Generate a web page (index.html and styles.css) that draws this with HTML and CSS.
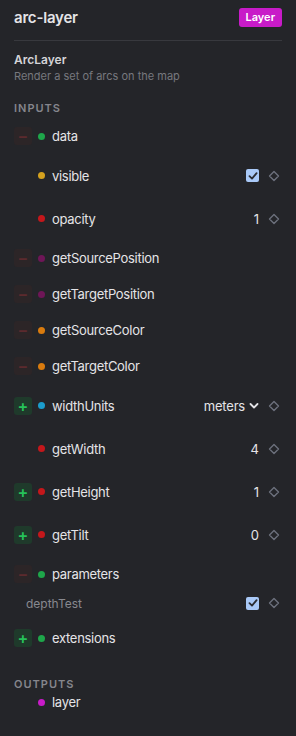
FILE: index.html
```html
<!DOCTYPE html>
<html>
<head>
  <title>arc-layer</title>
  <link rel="stylesheet" href="styles.css">
</head>
<body>
<div class="panel">
  <!-- Header -->
  <header class="panel-header">
    <div class="node-title">arc-layer</div>
    <span class="badge">Layer</span>
  </header>

  <div class="node-info">
    <div class="node-type">ArcLayer</div>
    <div class="node-desc">Render a set of arcs on the map</div>
  </div>

  <div class="section-title">INPUTS</div>

  <div class="row">
    <span class="btn minus">&minus;</span>
    <span class="dot green"></span>
    <span class="label">data</span>
  </div>

  <div class="row tall">
    <span class="btn-space"></span>
    <span class="dot yellow"></span>
    <span class="label">visible</span>
    <span class="checkbox"><svg width="10" height="10" viewBox="0 0 10 10"><path d="M1.5 5.2 L4 7.6 L8.6 2.2" fill="none" stroke="#2b2d33" stroke-width="1.8" stroke-linecap="round" stroke-linejoin="round"/></svg></span>
    <svg class="diamond" width="12" height="12" viewBox="0 0 12 12"><path d="M6 1.5 L10.5 6 L6 10.5 L1.5 6 Z" fill="none" stroke="#6c707c" stroke-width="1.4" stroke-linejoin="round"/></svg>
  </div>

  <div class="row tall">
    <span class="btn-space"></span>
    <span class="dot red"></span>
    <span class="label">opacity</span>
    <span class="value">1</span>
    <svg class="diamond" width="12" height="12" viewBox="0 0 12 12"><path d="M6 1.5 L10.5 6 L6 10.5 L1.5 6 Z" fill="none" stroke="#6c707c" stroke-width="1.4" stroke-linejoin="round"/></svg>
  </div>

  <div class="row">
    <span class="btn minus">&minus;</span>
    <span class="dot purple"></span>
    <span class="label">getSourcePosition</span>
  </div>

  <div class="row">
    <span class="btn minus">&minus;</span>
    <span class="dot purple"></span>
    <span class="label">getTargetPosition</span>
  </div>

  <div class="row">
    <span class="btn minus">&minus;</span>
    <span class="dot orange"></span>
    <span class="label">getSourceColor</span>
  </div>

  <div class="row">
    <span class="btn minus">&minus;</span>
    <span class="dot orange"></span>
    <span class="label">getTargetColor</span>
  </div>

  <div class="row tall">
    <span class="btn plus">+</span>
    <span class="dot blue"></span>
    <span class="label">widthUnits</span>
    <span class="select">meters <svg width="10" height="8" viewBox="0 0 10 8"><path d="M1.5 2 L5 5.5 L8.5 2" fill="none" stroke="#e4e4e7" stroke-width="1.8" stroke-linecap="round" stroke-linejoin="round"/></svg></span>
    <svg class="diamond" width="12" height="12" viewBox="0 0 12 12"><path d="M6 1.5 L10.5 6 L6 10.5 L1.5 6 Z" fill="none" stroke="#6c707c" stroke-width="1.4" stroke-linejoin="round"/></svg>
  </div>

  <div class="row tall">
    <span class="btn-space"></span>
    <span class="dot red"></span>
    <span class="label">getWidth</span>
    <span class="value">4</span>
    <svg class="diamond" width="12" height="12" viewBox="0 0 12 12"><path d="M6 1.5 L10.5 6 L6 10.5 L1.5 6 Z" fill="none" stroke="#6c707c" stroke-width="1.4" stroke-linejoin="round"/></svg>
  </div>

  <div class="row tall">
    <span class="btn plus">+</span>
    <span class="dot red"></span>
    <span class="label">getHeight</span>
    <span class="value">1</span>
    <svg class="diamond" width="12" height="12" viewBox="0 0 12 12"><path d="M6 1.5 L10.5 6 L6 10.5 L1.5 6 Z" fill="none" stroke="#6c707c" stroke-width="1.4" stroke-linejoin="round"/></svg>
  </div>

  <div class="row tall">
    <span class="btn plus">+</span>
    <span class="dot red"></span>
    <span class="label">getTilt</span>
    <span class="value">0</span>
    <svg class="diamond" width="12" height="12" viewBox="0 0 12 12"><path d="M6 1.5 L10.5 6 L6 10.5 L1.5 6 Z" fill="none" stroke="#6c707c" stroke-width="1.4" stroke-linejoin="round"/></svg>
  </div>

  <div class="row">
    <span class="btn minus">&minus;</span>
    <span class="dot green"></span>
    <span class="label">parameters</span>
  </div>

  <div class="row sub">
    <span class="label sub-label">depthTest</span>
    <span class="checkbox"><svg width="10" height="10" viewBox="0 0 10 10"><path d="M1.5 5.2 L4 7.6 L8.6 2.2" fill="none" stroke="#2b2d33" stroke-width="1.8" stroke-linecap="round" stroke-linejoin="round"/></svg></span>
    <svg class="diamond" width="12" height="12" viewBox="0 0 12 12"><path d="M6 1.5 L10.5 6 L6 10.5 L1.5 6 Z" fill="none" stroke="#6c707c" stroke-width="1.4" stroke-linejoin="round"/></svg>
  </div>

  <div class="row">
    <span class="btn plus">+</span>
    <span class="dot green"></span>
    <span class="label">extensions</span>
  </div>

  <div class="section-title outputs">OUTPUTS</div>

  <div class="row output">
    <span class="btn-space"></span>
    <span class="dot magenta"></span>
    <span class="label">layer</span>
  </div>
</div>
</body>
</html>
```

FILE: styles.css
```css
/* General */
html, body {
    margin: 0;
    background-color: #242529;
}

body {
    font-family: Inter, "Noto Sans", sans-serif;
    color: #e4e4e7;
    min-height: 736px;
}

.panel {
    padding: 0 14px;
}

/* Header */
.panel-header {
    box-sizing: border-box;
    display: flex;
    justify-content: space-between;
    align-items: flex-start;
    height: 41px;
    padding-top: 8px;
    border-bottom: 1px solid #38393e;
}

.node-title {
    font-size: 15px;
    font-weight: 600;
    line-height: 20px;
    letter-spacing: -0.2px;
    color: #e4e4e7;
}

.badge {
    background-color: #c81bc8;
    color: #fff;
    font-size: 11px;
    font-weight: 600;
    border-radius: 3px;
    height: 19px;
    line-height: 19px;
    padding: 0 7px;
}

.node-info {
    margin-top: 11px;
}

.node-type {
    font-size: 12px;
    font-weight: 600;
    line-height: 16px;
    color: #d4d4d8;
}

.node-desc {
    font-size: 11px;
    line-height: 16px;
    color: #77787e;
}

.section-title {
    margin-top: 17px;
    margin-bottom: 3px;
    font-size: 11px;
    line-height: 14px;
    font-weight: 600;
    letter-spacing: 1px;
    color: #85868c;
}

.section-title.outputs {
    margin-top: 21px;
    margin-bottom: 0;
}

/* Rows */
.row {
    display: flex;
    align-items: center;
    height: 36px;
}

.row.tall {
    height: 43px;
}

.row.sub {
    height: 22px;
    margin-bottom: 6px;
}

.row.output {
    height: 22px;
}

.btn, .btn-space {
    width: 18px;
    height: 18px;
    flex-shrink: 0;
}

.btn {
    display: flex;
    align-items: center;
    justify-content: center;
    border-radius: 3px;
    font-size: 16px;
    font-weight: 600;
    line-height: 1;
}

.btn.minus {
    background-color: #2c2527;
    color: #5c2a2e;
}

.btn.plus {
    background-color: #1f3a2b;
    color: #26c25a;
}

.dot {
    width: 7px;
    height: 7px;
    border-radius: 50%;
    margin-left: 6px;
    margin-right: 7px;
    flex-shrink: 0;
}

.dot.green { background-color: #1ea64a; }
.dot.yellow { background-color: #d4a11e; }
.dot.red { background-color: #c4171b; }
.dot.purple { background-color: #6e1657; }
.dot.orange { background-color: #d97b0e; }
.dot.blue { background-color: #1b9ccc; }
.dot.magenta { background-color: #c81bc8; }

.label {
    font-size: 13px;
    letter-spacing: -0.3px;
    color: #e4e4e7;
    flex: 1;
}

.sub-label {
    padding-left: 12px;
    font-size: 12px;
    letter-spacing: 0;
    color: #88898f;
}

.value {
    font-size: 13px;
    color: #e4e4e7;
    margin-right: 9px;
}

.select {
    display: flex;
    align-items: center;
    gap: 4px;
    font-size: 13px;
    letter-spacing: -0.2px;
    color: #e4e4e7;
    margin-right: 9px;
}

.checkbox {
    display: flex;
    align-items: center;
    justify-content: center;
    width: 13px;
    height: 13px;
    border-radius: 2px;
    background-color: #a9c9f7;
    margin-right: 9px;
}

.diamond {
    margin-right: 2px;
    flex-shrink: 0;
}
```
